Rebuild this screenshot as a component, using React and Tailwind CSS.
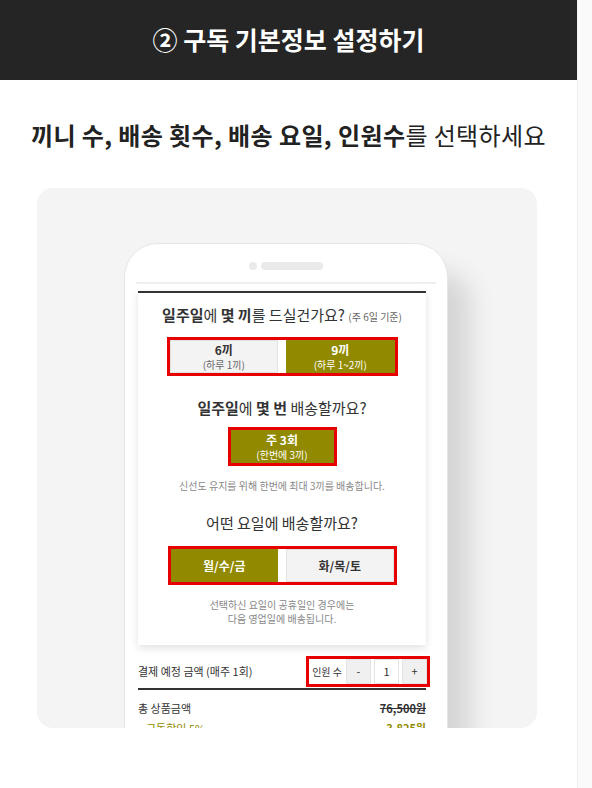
import React from 'react';

const olive = 'bg-[#918a00]';

function RedBox({ className = '', children }) {
    return <div className={`border-[3px] border-[#e60000] ${className}`}>{children}</div>;
}

function Choice({ active, title, sub }) {
    return (
        <div
            className={`flex flex-col items-center justify-center h-[33px] ${
                active ? `${olive} text-white` : 'bg-[#f3f3f3] text-[#333] border border-[#e2e2e2]'
            }`}
        >
            <span className="text-[12px] leading-[16px] font-bold">{title}</span>
            {sub && (
                <span className={`text-[10px] leading-[14px] ${active ? 'text-white' : 'text-[#666]'}`}>{sub}</span>
            )}
        </div>
    );
}

export default function App() {
    return (
        <div className="flex w-[592px] h-[788px] bg-white font-['Noto_Sans_CJK_KR','Noto_Sans',sans-serif] overflow-hidden">
            <div className="w-[577px] flex flex-col">
                <header className="h-20 bg-[#252525] flex items-center justify-center">
                    <h1 className="text-white text-[25px] font-bold">② 구독 기본정보 설정하기</h1>
                </header>

                <p className="mt-[39px] text-center text-[24px] leading-8 text-[#222] tracking-[0.4px]">
                    <span className="font-bold">끼니 수, 배송 횟수, 배송 요일, 인원수</span>
                    <span>를 선택하세요</span>
                </p>

                <div className="mt-[37px] ml-[37px] w-[500px] h-[540px] rounded-2xl bg-[#f4f4f4] overflow-hidden">
                    <div className="ml-[87px] mt-[55px] w-[324px] rounded-t-[34px] bg-white border border-[#e6e6e6] shadow-[28px_24px_26px_-6px_rgba(0,0,0,0.13)]">
                        <div className="flex items-center justify-center gap-[4px] pt-[18px] mb-[12px]">
                            <div className="w-[8px] h-[8px] rounded-full bg-[#eaeaea]" />
                            <div className="w-[62px] h-[8px] rounded-full bg-[#eaeaea]" />
                        </div>

                        <div className="mx-[11px] border-t-2 border-[#eeeeee] pt-[7px] pb-10">
                            <div className="ml-[2px] w-[288px] bg-white border-t-2 border-[#333] shadow-[0_3px_8px_rgba(0,0,0,0.12)] pb-[19px] flex flex-col items-center text-[#333]">
                                <p className="mt-[12px] text-[15px] leading-5 whitespace-nowrap">
                                    <span className="font-bold">일주일</span>에 <span className="font-bold">몇 끼</span>를 드실건가요?{' '}
                                    <span className="text-[10px] text-[#666]">(주 6일 기준)</span>
                                </p>
                                <RedBox className="mt-[10px] w-[231px] grid grid-cols-2 gap-[8px]">
                                    <Choice title="6끼" sub="(하루 1끼)" />
                                    <Choice active title="9끼" sub="(하루 1~2끼)" />
                                </RedBox>

                                <p className="mt-[22px] text-[15px] leading-5">
                                    <span className="font-bold">일주일</span>에 <span className="font-bold">몇 번</span> 배송할까요?
                                </p>
                                <RedBox className="mt-[9px] w-[109px]">
                                    <Choice active title="주 3회" sub="(한번에 3끼)" />
                                </RedBox>
                                <p className="mt-[13px] text-[10px] leading-[14px] text-[#888]">
                                    신선도 유지를 위해 한번에 최대 3끼를 배송합니다.
                                </p>

                                <p className="mt-[20px] text-[15px] leading-5">어떤 요일에 배송할까요?</p>
                                <RedBox className="mt-[13px] w-[229px] grid grid-cols-2 gap-[8px]">
                                    <Choice active title="월/수/금" />
                                    <Choice title="화/목/토" />
                                </RedBox>
                                <p className="mt-[13px] text-[10px] leading-[14px] text-[#888] text-center">
                                    선택하신 요일이 공휴일인 경우에는
                                    <br />
                                    다음 영업일에 배송됩니다.
                                </p>
                            </div>

                            <div className="ml-[2px] w-[288px] mt-[11px]">
                                <div className="flex items-center justify-between border-b-2 border-[#333] pb-[1px]">
                                    <span className="text-[11px] text-[#333]">결제 예정 금액 (매주 1회)</span>
                                    <RedBox className="-mr-[4px] flex items-center gap-[3px] pl-[3px] h-[31px]">
                                        <span className="text-[10px] text-[#333] mr-[1px]">인원 수</span>
                                        <span className="w-[25px] h-[25px] bg-[#f0f0f0] border border-[#e4e4e4] flex items-center justify-center text-[11px] text-[#333]">-</span>
                                        <span className="w-[25px] h-[25px] bg-white border border-[#e4e4e4] flex items-center justify-center text-[11px] text-[#333]">1</span>
                                        <span className="w-[25px] h-[25px] bg-[#f0f0f0] border border-[#e4e4e4] flex items-center justify-center text-[11px] text-[#333]">+</span>
                                    </RedBox>
                                </div>
                                <div className="flex justify-between mt-[10px] text-[11px] leading-4 text-[#333]">
                                    <span>총 상품금액</span>
                                    <span className="line-through font-bold">76,500원</span>
                                </div>
                                <div className="flex justify-between mt-[4px] text-[11px] leading-4 text-[#918a00]">
                                    <span className="ml-[8px]">구독할인 5%</span>
                                    <span className="font-bold">-3,825원</span>
                                </div>
                            </div>
                        </div>
                    </div>
                </div>
            </div>
            <div className="w-[15px] h-full bg-[#fafafa] border-l border-[#f0f0f0]" />
        </div>
    );
}
